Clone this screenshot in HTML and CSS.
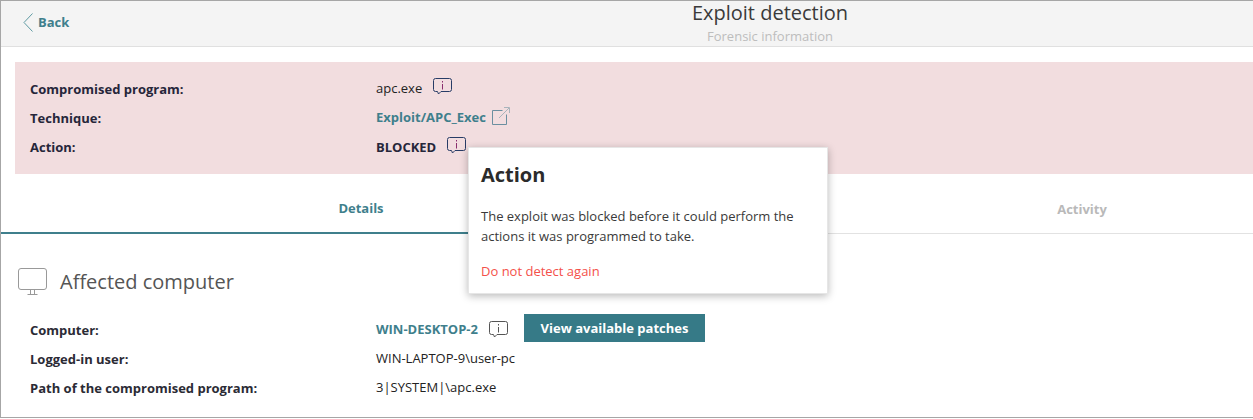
FILE: index.html
```html
<!DOCTYPE html>
<html lang="en">
<head>
<meta charset="utf-8">
<title>Exploit detection</title>
<link rel="stylesheet" href="styles.css">
</head>
<body>
<div class="frame">
  <div class="page">
    <header class="header">
      <a class="back">
        <svg class="back-icon" width="10" height="19" viewBox="0 0 10 19"><path d="M9.500 .5 1 9.500l8.500 9" fill="none" stroke="#5f9aa3" stroke-width="1"/></svg>
        <span>Back</span>
      </a>
      <div class="titles">
        <div class="title">Exploit detection</div>
        <div class="subtitle">Forensic information</div>
      </div>
    </header>

    <section class="banner">
      <div class="row">
        <div class="label">Compromised program:</div>
        <div class="value value-raised"><span>apc.exe</span>
          <svg class="info" width="19" height="17" viewBox="0 0 19 17"><path d="M2.500.5h14a2 2 0 0 1 2 2v9a2 2 0 0 1-2 2H8l-2.500 2.500-1-2.500h-2a2 2 0 0 1-2-2v-9a2 2 0 0 1 2-2z" fill="none" stroke="#283c66" stroke-width="1"/><path d="M9.500 3v1.500M9.500 6v5.500" stroke="#8a2f6d" stroke-width="1"/></svg>
        </div>
      </div>
      <div class="row">
        <div class="label">Technique:</div>
        <div class="value value-raised"><a class="link">Exploit/APC_Exec</a>
          <svg class="ext" width="18" height="18" viewBox="0 0 18 18"><path d="M10.500 3.500H.5v14h14v-10" fill="none" stroke="#6b8fa0" stroke-width="1"/><path d="M7 11 17 1M12 .5h5.500V6" fill="none" stroke="#a9b4bc" stroke-width="1"/></svg>
        </div>
      </div>
      <div class="row">
        <div class="label">Action:</div>
        <div class="value"><strong class="status">BLOCKED</strong>
          <svg class="info" width="19" height="17" viewBox="0 0 19 17"><path d="M2.500.5h14a2 2 0 0 1 2 2v9a2 2 0 0 1-2 2H8l-2.500 2.500-1-2.500h-2a2 2 0 0 1-2-2v-9a2 2 0 0 1 2-2z" fill="none" stroke="#283c66" stroke-width="1"/><path d="M9.500 3v1.500M9.500 6v5.500" stroke="#8a2f6d" stroke-width="1"/></svg>
        </div>
      </div>
    </section>

    <nav class="tabs">
      <div class="tab tab-active">Details</div>
      <div class="tab">Activity</div>
    </nav>

    <section class="section">
      <h2 class="section-title">
        <svg class="monitor" width="30" height="27" viewBox="0 0 30 27"><rect x=".5" y=".5" width="28" height="21" rx="2.500" fill="none" stroke="#999"/><path d="M12.500 22v4M16.500 22v4M9.500 26.500h10" fill="none" stroke="#999"/></svg>
        <span>Affected computer</span>
      </h2>
      <div class="row">
        <div class="label">Computer:</div>
        <div class="value"><a class="link link-caps">WIN-DESKTOP-2</a>
          <svg class="info info-plain" width="19" height="17" viewBox="0 0 19 17"><path d="M2.500.5h14a2 2 0 0 1 2 2v9a2 2 0 0 1-2 2H8l-2.500 2.500-1-2.500h-2a2 2 0 0 1-2-2v-9a2 2 0 0 1 2-2z" fill="none" stroke="#555" stroke-width="1"/><path d="M9.500 3v1.500M9.500 6v5.500" stroke="#555" stroke-width="1"/></svg>
          <button class="btn">View available patches</button>
        </div>
      </div>
      <div class="row">
        <div class="label">Logged-in user:</div>
        <div class="value value-raised"><span>WIN-LAPTOP-9\user-pc</span></div>
      </div>
      <div class="row">
        <div class="label">Path of the compromised program:</div>
        <div class="value value-raised"><span>3|SYSTEM|\apc.exe</span></div>
      </div>
    </section>
  </div>

  <aside class="popup">
    <h3 class="popup-title">Action</h3>
    <p class="popup-text">The exploit was blocked before it could perform the actions it was programmed to take.</p>
    <a class="popup-link">Do not detect again</a>
  </aside>
</div>
</body>
</html>
```

FILE: styles.css
```css
* { box-sizing: border-box; }
html, body { margin: 0; padding: 0; background: #fff; }
body { font-family: "Open Sans", "Liberation Sans", sans-serif; color: #2b2b2b; font-size: 13px; }

.frame {
  position: relative;
  width: 1253px;
  height: 418px;
  overflow: hidden;
  border-top: 1px solid #a6a6a6;
  border-left: 1px solid #a6a6a6;
  border-bottom: 1px solid #a6a6a6;
}
.page { width: 1540px; }

.header {
  position: relative;
  height: 46px;
  background: #f4f4f4;
  border-bottom: 1px solid #e0e0e0;
  display: flex;
  justify-content: center;
}
.back {
  position: absolute;
  left: 22px;
  top: 11px;
  display: flex;
  align-items: center;
  gap: 5px;
  color: #3f7f8c;
  font-weight: 700;
  font-size: 13px;
  height: 20px;
}
.titles { text-align: center; margin-left: -2px; }
.title { font-size: 20px; line-height: 24px; color: #3a3a3a; }
.subtitle { font-size: 13px; line-height: 18px; margin-top: 2px; color: #bdbdbd; font-weight: 400; }

.banner {
  margin: 15px 0 0 14px;
  height: 112px;
  padding: 12px 15px 0;
  background: #f2dddf;
}
.row { display: flex; height: 29px; align-items: center; }
.label { width: 346px; font-weight: 700; color: #26263a; flex: none; }
.value { display: flex; align-items: center; color: #222; }
.value-raised { margin-top: -2px; }
.info { margin-left: 11px; margin-top: -2px; }
.info-plain { margin-top: 0; }
.ext { margin-left: 6px; margin-top: -2px; }
.link { color: #3f7f8c; font-weight: 700; }
.link-caps { margin-top: -2px; }
.status { font-weight: 700; color: #26263a; }

.tabs {
  display: grid;
  grid-template-columns: 720px 722px;
  height: 60px;
  width: 1442px;
}
.tab {
  display: flex;
  align-items: center;
  justify-content: center;
  padding-top: 10px;
  font-weight: 700;
  color: #b9b9b9;
  border-bottom: 1px solid #e2e2e2;
}
.tab-active { color: #3f7f8c; border-bottom: 2px solid #3f7f8c; }

.section { padding: 31px 15px 0 14px; }
.section-title {
  margin: 0 0 18px 3px;
  height: 32px;
  display: flex;
  align-items: center;
  gap: 12px;
  font-size: 20px;
  font-weight: 400;
  color: #555;
}
.section .row { margin-left: 15px; }
.section .label { color: #2b2b35; }
.btn {
  margin: -4px 0 0 16px;
  height: 28px;
  width: 181px;
  border: 0;
  background: #367a87;
  color: #fff;
  font-family: inherit;
  font-size: 13px;
  font-weight: 700;
  padding: 0;
}

.popup {
  position: absolute;
  left: 467px;
  top: 146px;
  width: 360px;
  height: 147px;
  padding: 13px 12px 0;
  background: #fff;
  border: 1px solid #e6e6e6;
  box-shadow: 0 2px 8px rgba(0,0,0,.28);
}
.popup-title { margin: 0 0 17px; font-size: 20px; line-height: 28px; font-weight: 700; color: #2b2b2b; }
.popup-text { margin: 0 0 15px; line-height: 20px; color: #3a3a3a; }
.popup-link { color: #f4504a; line-height: 20px; display: block; }
```
